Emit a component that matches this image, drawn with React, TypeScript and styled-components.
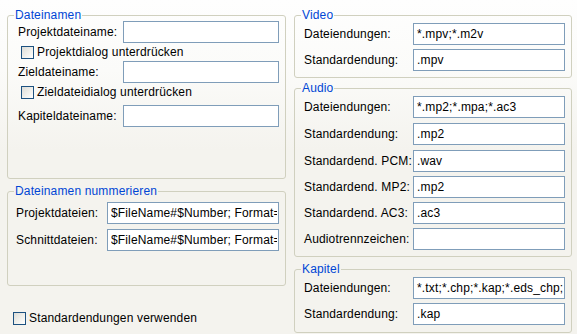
import styled, { createGlobalStyle } from "styled-components";

const GlobalStyle = createGlobalStyle`
  html, body {
    margin: 0;
    padding: 0;
  }
  body {
    width: 577px;
    height: 334px;
    overflow: hidden;
    background: linear-gradient(#fefefe 0px, #fbfbf9 70px, #f4f3ee 150px, #f4f3ee 100%);
    font-family: "Liberation Sans", Arial, sans-serif;
    font-size: 12px;
    letter-spacing: 0.15px;
    color: #000;
  }
`;

const Page = styled.div`
  display: grid;
  grid-template-columns: 279px 278px;
  column-gap: 8px;
  padding: 8px 6px 0 7px;
`;

const Column = styled.div`
  display: flex;
  flex-direction: column;
`;

const Group = styled.fieldset<{ $h: number; $mt?: number }>`
  margin: ${(p) => p.$mt || 0}px 0 0 0;
  padding: 0;
  min-width: 0;
  height: ${(p) => p.$h}px;
  box-sizing: border-box;
  border: 1px solid #d0d0bf;
  border-radius: 3px;
`;

const Legend = styled.legend`
  color: #0046d5;
  line-height: 14px;
  padding: 0 1px;
  margin-left: 6px;
`;

const Body = styled.div<{ $pl: number; $mt: number }>`
  display: flex;
  flex-direction: column;
  margin-top: ${(p) => p.$mt}px;
  padding: 0 6px 0 ${(p) => p.$pl}px;
`;

const Row = styled.div<{ $label: number; $mt?: number }>`
  display: grid;
  grid-template-columns: ${(p) => p.$label}px 1fr;
  align-items: center;
  height: 22px;
  margin-top: ${(p) => p.$mt || 0}px;
`;

const Label = styled.span`
  white-space: nowrap;
`;

const Input = styled.input`
  box-sizing: border-box;
  width: 100%;
  height: 22px;
  margin: 0;
  padding: 0 1px 0 3px;
  border: 1px solid #7f9db9;
  background: #fff;
  font: inherit;
  letter-spacing: inherit;
  color: #000;
  outline: none;
`;

const CheckRow = styled.label<{ $ml: number; $h: number; $mt?: number }>`
  display: flex;
  align-items: center;
  gap: 3px;
  height: ${(p) => p.$h}px;
  margin: ${(p) => p.$mt || 0}px 0 0 ${(p) => p.$ml}px;
  white-space: nowrap;
`;

const Box = styled.span`
  width: 13px;
  height: 13px;
  box-sizing: border-box;
  border: 1px solid #1c5180;
  background: linear-gradient(135deg, #dcdcd7 0%, #f0f0ec 55%, #ffffff 100%);
  flex: none;
`;

function Check({ text, ml, h, mt }: { text: string; ml: number; h: number; mt?: number }) {
  return (
    <CheckRow $ml={ml} $h={h} $mt={mt}>
      <Box />
      {text}
    </CheckRow>
  );
}

type Field = { label: string; value?: string; mt?: number };

function Fields({ items, label }: { items: Field[]; label: number }) {
  return (
    <>
      {items.map((f) => (
        <Row key={f.label} $label={label} $mt={f.mt}>
          <Label>{f.label}</Label>
          <Input readOnly value={f.value || ""} />
        </Row>
      ))}
    </>
  );
}

const numberFormat = "$FileName#$Number; Format=00";

export default function App() {
  return (
    <>
      <GlobalStyle />
      <Page>
        <Column>
          <Group $h={171}>
            <Legend>Dateinamen</Legend>
            <Body $pl={10} $mt={-1}>
              <Fields label={105} items={[{ label: "Projektdateiname:" }]} />
              <Check text="Projektdialog unterdrücken" ml={3} h={18} />
              <Fields label={105} items={[{ label: "Zieldateiname:" }]} />
              <Check text="Zieldateidialog unterdrücken" ml={3} h={18} />
              <Fields label={105} items={[{ label: "Kapiteldateiname:", mt: 4 }]} />
            </Body>
          </Group>
          <Group $h={102} $mt={5}>
            <Legend>Dateinamen nummerieren</Legend>
            <Body $pl={8} $mt={4}>
              <Fields
                label={91}
                items={[
                  { label: "Projektdateien:", value: numberFormat },
                  { label: "Schnittdateien:", value: numberFormat, mt: 5 },
                ]}
              />
            </Body>
          </Group>
          <Check text="Standardendungen verwenden" ml={6} h={18} mt={23} />
        </Column>
        <Column>
          <Group $h={70}>
            <Legend>Video</Legend>
            <Body $pl={9} $mt={1}>
              <Fields
                label={109}
                items={[
                  { label: "Dateiendungen:", value: "*.mpv;*.m2v" },
                  { label: "Standardendung:", value: ".mpv", mt: 4 },
                ]}
              />
            </Body>
          </Group>
          <Group $h={176} $mt={3}>
            <Legend>Audio</Legend>
            <Body $pl={9} $mt={1}>
              <Fields
                label={109}
                items={[
                  { label: "Dateiendungen:", value: "*.mp2;*.mpa;*.ac3" },
                  { label: "Standardendung:", value: ".mp2", mt: 5 },
                  { label: "Standardend. PCM:", value: ".wav", mt: 5 },
                  { label: "Standardend. MP2:", value: ".mp2", mt: 4 },
                  { label: "Standardend. AC3:", value: ".ac3", mt: 4 },
                  { label: "Audiotrennzeichen:", mt: 4 },
                ]}
              />
            </Body>
          </Group>
          <Group $h={71} $mt={5}>
            <Legend>Kapitel</Legend>
            <Body $pl={9} $mt={1}>
              <Fields
                label={109}
                items={[
                  { label: "Dateiendungen:", value: "*.txt;*.chp;*.kap;*.eds_chp;*.cue" },
                  { label: "Standardendung:", value: ".kap", mt: 4 },
                ]}
              />
            </Body>
          </Group>
        </Column>
      </Page>
    </>
  );
}
